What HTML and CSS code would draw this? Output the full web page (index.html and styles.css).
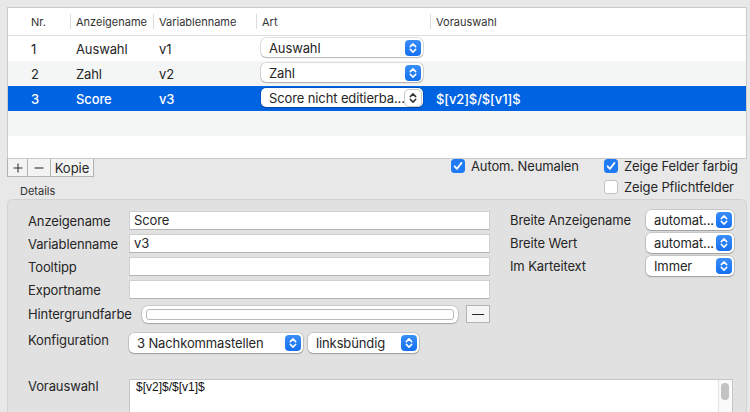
FILE: index.html
```html
<!DOCTYPE html>
<html lang="de">
<head>
<meta charset="utf-8">
<link rel="stylesheet" href="styles.css">
</head>
<body>
<div class="window">
  <div class="table">
    <div class="trow thead">
      <div class="th c-nr">Nr.</div>
      <div class="th">Anzeigename</div>
      <div class="th">Variablenname</div>
      <div class="th">Art</div>
      <div class="th">Vorauswahl</div>
    </div>
    <div class="trow">
      <div class="td c-nr">1</div>
      <div class="td">Auswahl</div>
      <div class="td">v1</div>
      <div class="td c-art"><div class="popup tpop"><span class="ptxt">Auswahl</span><span class="stepper"><svg viewBox="0 0 16 16" width="16" height="16"><path d="M5.3 6.6 8 3.9l2.7 2.7M5.3 9.4 8 12.1l2.7-2.7" fill="none" stroke="#fff" stroke-width="1.5" stroke-linecap="round" stroke-linejoin="round"/></svg></span></div></div>
      <div class="td"></div>
    </div>
    <div class="trow alt">
      <div class="td c-nr">2</div>
      <div class="td">Zahl</div>
      <div class="td">v2</div>
      <div class="td c-art"><div class="popup tpop"><span class="ptxt">Zahl</span><span class="stepper"><svg viewBox="0 0 16 16" width="16" height="16"><path d="M5.3 6.6 8 3.9l2.7 2.7M5.3 9.4 8 12.1l2.7-2.7" fill="none" stroke="#fff" stroke-width="1.5" stroke-linecap="round" stroke-linejoin="round"/></svg></span></div></div>
      <div class="td"></div>
    </div>
    <div class="trow sel">
      <div class="td c-nr">3</div>
      <div class="td">Score</div>
      <div class="td">v3</div>
      <div class="td c-art"><div class="popup tpop"><span class="ptxt">Score nicht editierba...</span><span class="stepper plain"><svg viewBox="0 0 16 16" width="16" height="16"><path d="M5.3 6.6 8 3.9l2.7 2.7M5.3 9.4 8 12.1l2.7-2.7" fill="none" stroke="#333" stroke-width="1.5" stroke-linecap="round" stroke-linejoin="round"/></svg></span></div></div>
      <div class="td">$[v2]$/$[v1]$</div>
    </div>
    <div class="trow alt empty"></div>
  </div>

  <div class="toolbar">
    <div class="tb-left">
      <div class="btn-group">
        <button class="sqbtn b-plus" aria-label="+"><svg viewBox="0 0 10 10" width="10" height="10"><path d="M5 0.5v9M0.5 5h9" stroke="#333" stroke-width="1.1" fill="none"/></svg></button>
        <button class="sqbtn b-minus" aria-label="−"><svg viewBox="0 0 10 10" width="10" height="10"><path d="M0.5 5h9" stroke="#333" stroke-width="1.1" fill="none"/></svg></button>
        <button class="sqbtn b-copy">Kopie</button>
      </div>
      <div class="section-label">Details</div>
    </div>
    <div class="checks">
      <div class="check-col col-a">
        <div class="check"><span class="cbox on"><svg viewBox="0 0 14 14" width="14" height="14"><path d="M3.6 7.3 6 9.8l4.5-5.9" fill="none" stroke="#fff" stroke-width="1.8" stroke-linecap="round" stroke-linejoin="round"/></svg></span><span>Autom. Neumalen</span></div>
      </div>
      <div class="check-col">
        <div class="check"><span class="cbox on"><svg viewBox="0 0 14 14" width="14" height="14"><path d="M3.6 7.3 6 9.8l4.5-5.9" fill="none" stroke="#fff" stroke-width="1.8" stroke-linecap="round" stroke-linejoin="round"/></svg></span><span>Zeige Felder farbig</span></div>
        <div class="check"><span class="cbox"></span><span>Zeige Pflichtfelder</span></div>
      </div>
    </div>
  </div>

  <div class="details">
    <div class="dtop">
      <div class="lform">
        <div class="frow"><span class="flabel">Anzeigename</span><div class="tfield">Score</div></div>
        <div class="frow"><span class="flabel">Variablenname</span><div class="tfield">v3</div></div>
        <div class="frow"><span class="flabel">Tooltipp</span><div class="tfield"></div></div>
        <div class="frow"><span class="flabel">Exportname</span><div class="tfield"></div></div>
        <div class="frow r-color"><span class="flabel">Hintergrundfarbe</span>
          <div class="color-line"><div class="well"><div class="well-inner"></div></div><button class="well-btn">—</button></div>
        </div>
        <div class="frow r-konf"><span class="flabel top">Konfiguration</span>
          <div class="konf">
            <div class="popup dpop w-nach"><span class="ptxt">3 Nachkommastellen</span><span class="stepper"><svg viewBox="0 0 16 16" width="16" height="16"><path d="M5.3 6.6 8 3.9l2.7 2.7M5.3 9.4 8 12.1l2.7-2.7" fill="none" stroke="#fff" stroke-width="1.5" stroke-linecap="round" stroke-linejoin="round"/></svg></span></div>
            <div class="popup dpop w-links"><span class="ptxt">linksbündig</span><span class="stepper"><svg viewBox="0 0 16 16" width="16" height="16"><path d="M5.3 6.6 8 3.9l2.7 2.7M5.3 9.4 8 12.1l2.7-2.7" fill="none" stroke="#fff" stroke-width="1.5" stroke-linecap="round" stroke-linejoin="round"/></svg></span></div>
          </div>
        </div>
      </div>
      <div class="rform">
        <div class="rrow"><span class="flabel">Breite Anzeigename</span><div class="popup dpop"><span class="ptxt">automat...</span><span class="stepper"><svg viewBox="0 0 16 16" width="16" height="16"><path d="M5.3 6.6 8 3.9l2.7 2.7M5.3 9.4 8 12.1l2.7-2.7" fill="none" stroke="#fff" stroke-width="1.5" stroke-linecap="round" stroke-linejoin="round"/></svg></span></div></div>
        <div class="rrow"><span class="flabel">Breite Wert</span><div class="popup dpop"><span class="ptxt">automat...</span><span class="stepper"><svg viewBox="0 0 16 16" width="16" height="16"><path d="M5.3 6.6 8 3.9l2.7 2.7M5.3 9.4 8 12.1l2.7-2.7" fill="none" stroke="#fff" stroke-width="1.5" stroke-linecap="round" stroke-linejoin="round"/></svg></span></div></div>
        <div class="rrow"><span class="flabel">Im Karteitext</span><div class="popup dpop"><span class="ptxt">Immer</span><span class="stepper"><svg viewBox="0 0 16 16" width="16" height="16"><path d="M5.3 6.6 8 3.9l2.7 2.7M5.3 9.4 8 12.1l2.7-2.7" fill="none" stroke="#fff" stroke-width="1.5" stroke-linecap="round" stroke-linejoin="round"/></svg></span></div></div>
      </div>
    </div>
    <div class="vrow">
      <span class="flabel top">Vorauswahl</span>
      <div class="tarea"><div class="tarea-text">$[v2]$/$[v1]$</div><div class="vscroll"><div class="thumb"></div></div></div>
    </div>
  </div>
</div>
</body>
</html>
```

FILE: styles.css
```css
* { box-sizing: border-box; margin: 0; padding: 0; }
html, body { width: 750px; height: 412px; overflow: hidden; }
body {
  background: #e8e8e8;
  font-family: Inter, "Noto Sans", "Liberation Sans", sans-serif;
  font-size: 13px;
  letter-spacing: -0.12px;
  color: #262626;
}
.window { padding: 7px 3px 0 7px; height: 412px; overflow: hidden; }

/* table */
.table {
  height: 152px;
  background: #fff;
  border: 1px solid #cacaca;
  overflow: hidden;
}
.trow {
  display: grid;
  grid-template-columns: 62px 83px 103px 174px 1fr;
  height: 25px;
}
.trow.alt { background: #f4f5f5; }
.trow.sel { background: #0063e1; color: #fff; font-weight: 500; }
.thead {
  height: 28px;
  border-bottom: 1px solid #dedede;
  font-size: 11px;
  letter-spacing: 0;
  color: #333;
}
.th {
  position: relative;
  display: flex;
  align-items: center;
  padding-left: 6px;
}
.th + .th::before {
  content: "";
  position: absolute;
  left: 0;
  top: 6px;
  bottom: 6px;
  width: 1px;
  background: #dcdcdc;
}
.td {
  display: flex;
  align-items: center;
  padding-left: 6px;
  white-space: nowrap;
}
.c-nr { padding-left: 23px; }
.td.c-art { padding-left: 5px; align-items: flex-start; padding-top: 2px; }

/* popups */
.popup {
  display: flex;
  align-items: center;
  background: #fff;
  border-radius: 5px;
  box-shadow: 0 0 0 0.5px rgba(0,0,0,0.22), 0 1px 1.5px rgba(0,0,0,0.22);
  padding-left: 8px;
  color: #262626;
  font-weight: 400;
  white-space: nowrap;
}
.tpop { width: 162px; height: 19px; }
.dpop { height: 20px; }
.ptxt { flex: 1; min-width: 0; }
.stepper {
  flex: none;
  width: 16px;
  height: 16px;
  margin-right: 2px;
  border-radius: 4px;
  background: linear-gradient(#3a8ef8, #1670ef);
  display: flex;
}
.stepper.plain {
  background: #fff;
  box-shadow: 0 0 0 1px #c9c9c9;
}
.stepper svg { display: block; }

/* toolbar */
.toolbar {
  display: flex;
  height: 40px;
}
.tb-left { display: flex; flex-direction: column; }
.btn-group {
  display: flex;
  height: 18px;
  border-left: 1px solid #b3b3b3;
}
.sqbtn {
  height: 18px;
  border: none;
  border-right: 1px solid #b3b3b3;
  border-bottom: 1px solid #b3b3b3;
  background: #f3f3f3;
  font-family: inherit;
  font-size: 13px;
  color: #262626;
  line-height: 16px;
  display: flex;
  align-items: center;
  justify-content: center;
}
.sqbtn svg { display: block; }
.b-plus { width: 20px; }
.b-minus { width: 23px; }
.b-copy { width: 43px; }
.section-label {
  margin-top: 8px;
  padding-left: 13px;
  font-size: 11px;
  letter-spacing: 0;
  line-height: 13px;
  color: #333;
}
.checks {
  margin-left: auto;
  display: flex;
}
.check-col {
  display: flex;
  flex-direction: column;
  gap: 7px;
  width: 143px;
}
.check-col.col-a { width: 153px; }
.check {
  display: flex;
  align-items: center;
  gap: 6px;
  height: 14px;
  white-space: nowrap;
}
.cbox {
  width: 14px;
  height: 14px;
  border-radius: 3.5px;
  background: #fff;
  box-shadow: inset 0 0 0 1px #c4c4c4;
  display: flex;
}
.cbox.on {
  background: #1f7af4;
  box-shadow: none;
}

/* details */
.details {
  height: 214px;
  background: #e1e1e1;
  border: 1px solid #d2d2d2;
  border-bottom: none;
  border-radius: 6px 6px 0 0;
  padding: 11px 12px 0 20px;
  overflow: hidden;
}
.dtop { display: flex; gap: 20px; }
.lform { width: 462px; display: flex; flex-direction: column; }
.frow {
  display: grid;
  grid-template-columns: 101px 1fr;
  align-items: center;
  height: 19px;
  margin-bottom: 4px;
}
.flabel { white-space: nowrap; line-height: 14px; }
.flabel.top { align-self: start; }
.tfield {
  height: 19px;
  background: #fff;
  border: 1px solid #cfcfcf;
  border-bottom-color: #b3b3b3;
  padding-left: 4px;
  line-height: 17px;
}
.r-color { height: 18px; margin-top: 2px; }
.color-line { display: flex; align-items: center; gap: 8px; height: 18px; }
.well {
  flex: 1;
  margin-left: 13px;
  height: 17px;
  background: #fff;
  border-radius: 6px;
  box-shadow: 0 0 0 0.5px rgba(0,0,0,0.2), 0 1px 1.5px rgba(0,0,0,0.2);
  padding: 3px 4px;
}
.well-inner {
  height: 11px;
  border: 1px solid #b9b9b9;
  border-radius: 3px;
  background: #fff;
}
.well-btn {
  width: 24px;
  height: 18px;
  border: 1px solid #b3b3b3;
  background: #f5f5f5;
  font-family: inherit;
  font-size: 12px;
  color: #262626;
  line-height: 14px;
}
.r-konf { height: 20px; margin-top: 6px; align-items: start; }
.konf { display: flex; gap: 5px; }
.w-nach { width: 174px; }
.w-links { width: 111px; }
.rform { width: 224px; display: flex; flex-direction: column; gap: 3px; }
.rrow {
  display: grid;
  grid-template-columns: 136px 88px;
  align-items: center;
  height: 20px;
}
.rrow:first-child { margin-top: -1px; }
.vrow {
  display: grid;
  grid-template-columns: 101px 604px;
  margin-top: 22px;
}
.tarea {
  height: 40px;
  background: #fff;
  border: 1px solid #c6c6c6;
  border-bottom: none;
  display: flex;
}
.tarea-text {
  flex: 1;
  padding-left: 6px;
  font-family: "Liberation Sans", Arial, sans-serif;
  font-size: 12px;
  letter-spacing: 0;
  line-height: 14px;
  color: #111;
}
.vscroll {
  width: 14px;
  background: #fafafa;
  border-left: 1px solid #e4e4e4;
  padding: 3px 0 0 2px;
}
.thumb {
  width: 8px;
  height: 17px;
  border-radius: 4px;
  background: #c2c2c2;
}
```
